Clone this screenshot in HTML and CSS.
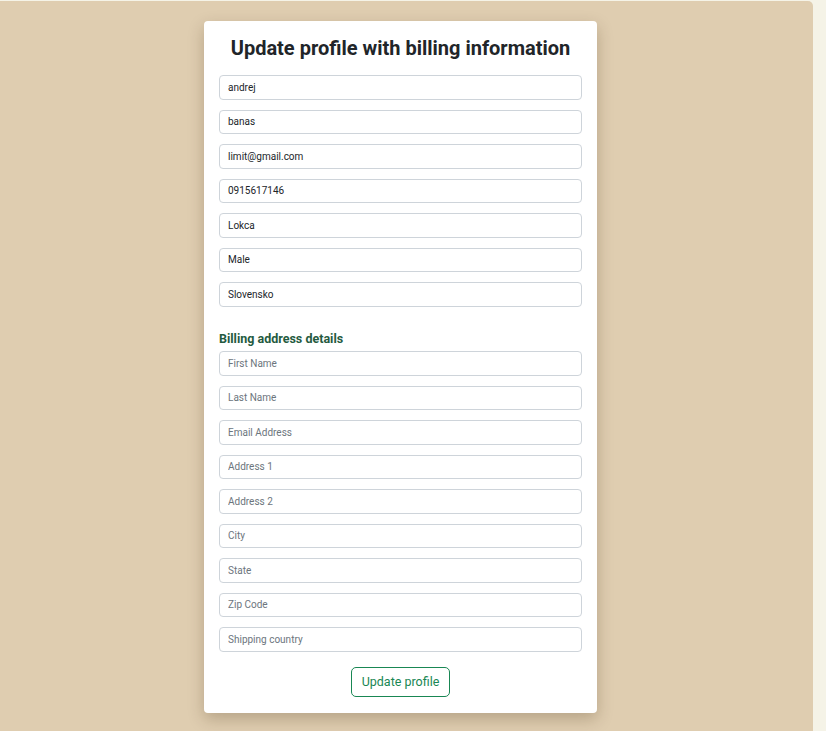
FILE: index.html
```html
<!DOCTYPE html>
<html lang="en">
<head>
<meta charset="utf-8">
<title>Update profile</title>
<link rel="stylesheet" href="styles.css">
</head>
<body>
<div class="page">
  <main class="panel">
    <form class="card">
      <h1 class="title">Update profile with billing information</h1>
      <input class="field" type="text" value="andrej">
      <input class="field" type="text" value="banas">
      <input class="field" type="text" value="limit@gmail.com">
      <input class="field" type="text" value="0915617146">
      <input class="field" type="text" value="Lokca">
      <input class="field" type="text" value="Male">
      <input class="field" type="text" value="Slovensko">
      <h2 class="section">Billing address details</h2>
      <input class="field" type="text" placeholder="First Name">
      <input class="field" type="text" placeholder="Last Name">
      <input class="field" type="text" placeholder="Email Address">
      <input class="field" type="text" placeholder="Address 1">
      <input class="field" type="text" placeholder="Address 2">
      <input class="field" type="text" placeholder="City">
      <input class="field" type="text" placeholder="State">
      <input class="field" type="text" placeholder="Zip Code">
      <input class="field" type="text" placeholder="Shipping country">
      <div class="actions">
        <button class="btn" type="button">Update profile</button>
      </div>
    </form>
  </main>
</div>
</body>
</html>
```

FILE: styles.css
```css
* { box-sizing: border-box; }
html, body { margin: 0; padding: 0; height: 100%; }
body {
  background: #f5f3e7;
  font-family: Roboto, "Liberation Sans", sans-serif;
  color: #212529;
  overflow: hidden;
}
.page {
  display: flex;
  height: 100%;
  padding-top: 1px;
}
.panel {
  width: 813px;
  height: 740px;
  background: #dfcdb0;
  border-top-right-radius: 5px;
  padding: 20px 0 0 204px;
}
.card {
  width: 393px;
  background: #fff;
  border-radius: 4px;
  box-shadow: 0 6px 16px rgba(60, 40, 10, 0.25);
  padding: 12px 15px 16px;
  display: flex;
  flex-direction: column;
}
.title {
  margin: 0 0 12px;
  font-size: 20px;
  line-height: 30px;
  font-weight: 700;
  text-align: center;
  color: #212529;
}
.field {
  display: block;
  width: 100%;
  height: 24.5px;
  margin: 0 0 10px;
  padding: 0 8px;
  border: 1px solid #ced4da;
  border-radius: 4px;
  font-family: Roboto, "Liberation Sans", sans-serif;
  font-size: 10px;
  color: #212529;
  background: #fff;
  outline: none;
}
.field::placeholder { color: #6c757d; opacity: 1; }
.section {
  margin: 13px 0 4.5px;
  font-size: 12.5px;
  line-height: 17px;
  font-weight: 700;
  color: #245a40;
}
.actions {
  display: flex;
  justify-content: center;
  margin-top: 5.5px;
}
.btn {
  height: 30px;
  width: 99px;
  padding: 0 0 1px;
  border: 1px solid #198754;
  border-radius: 5px;
  background: #fff;
  color: #198754;
  font-family: Roboto, "Liberation Sans", sans-serif;
  font-size: 12.5px;
}
```
